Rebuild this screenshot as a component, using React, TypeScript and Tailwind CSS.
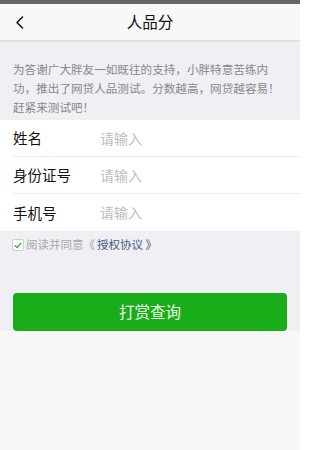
import React from 'react'

const fields = [
  { label: '姓名' },
  { label: '身份证号' },
  { label: '手机号' },
]

export default function App() {
  return (
    <div className="w-[300px] h-[450px] bg-[#f7f7f9] font-['Noto_Sans_CJK_SC','Noto_Sans',sans-serif] overflow-hidden">
      {/* status bar */}
      <div className="h-[4px] bg-[#666]" />

      {/* nav */}
      <header className="relative h-[37px] bg-[#f8f8f8] border-b border-[#dcdcdc] flex items-center justify-center shadow-[0_1px_2px_rgba(0,0,0,0.06)]">
        <button className="absolute left-[13px] top-[11px] w-[12px] h-[14px] flex items-center justify-center">
          <svg width="9" height="13" viewBox="0 0 9 13" fill="none">
            <path d="M7.5 1L2 6.5L7.5 12" stroke="#111" strokeWidth="1.6" strokeLinecap="round" strokeLinejoin="round" />
          </svg>
        </button>
        <h1 className="text-[15.5px] text-[#111] leading-none">人品分</h1>
      </header>

      <main className="bg-[#efeff4]">
        <p className="pl-[13px] pr-[12px] pt-[19px] pb-[3px] text-[11.6px] leading-[19px] text-[#888]">
          为答谢广大胖友一如既往的支持，小胖特意苦练内功，推出了网贷人品测试。分数越高，网贷越容易！赶紧来测试吧！
        </p>

        <div className="bg-white">
          {fields.map((f, i) => (
            <div key={f.label} className="pl-[13px]">
              <div className={`h-[37px] flex items-center ${i < fields.length - 1 ? 'border-b border-[#ececec]' : ''}`}>
                <span className="w-[87px] text-[14.5px] text-[#111]">{f.label}</span>
                <input
                  placeholder="请输入"
                  className="flex-1 min-w-0 bg-transparent outline-none text-[14px] placeholder:text-[#bdbdbd]"
                />
              </div>
            </div>
          ))}
        </div>

        <label className="h-[28px] pl-[12px] flex items-center gap-[2px] text-[11.5px]">
          <span className="w-[12px] h-[12px] rounded-[2px] border border-[#cfcfcf] bg-white flex items-center justify-center">
            <svg width="8" height="7" viewBox="0 0 8 7" fill="none">
              <path d="M1 3.6L3 5.6L7 1.2" stroke="#1aad19" strokeWidth="1.2" strokeLinecap="round" strokeLinejoin="round" />
            </svg>
          </span>
          <span className="text-[#a8a8a8]">阅读并同意《</span>
          <span className="text-[#4b5a80]">授权协议 》</span>
        </label>

        <div className="px-[13px] pt-[34px]">
          <button className="w-full h-[38px] rounded-[4px] bg-[#1aad19] text-[15.5px] text-[#eef8ea]">
            打赏查询
          </button>
        </div>
      </main>
    </div>
  )
}
